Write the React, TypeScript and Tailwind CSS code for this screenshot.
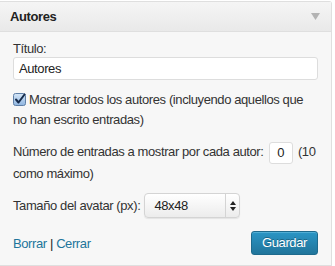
const Checkbox = () => (
    <span className="inline-block align-[-2px] mr-[3px] w-[13px] h-[13px] relative">
        <svg width="13" height="13" viewBox="0 0 13 13" className="block">
            <defs>
                <linearGradient id="cb" x1="0" y1="0" x2="0" y2="1">
                    <stop offset="0" stopColor="#d5e6f7"/>
                    <stop offset="1" stopColor="#8fb5e0"/>
                </linearGradient>
            </defs>
            <rect x="0.5" y="0.5" width="12" height="12" rx="2" fill="url(#cb)" stroke="#5f7fa6"/>
            <path d="M3 6.5 L5.5 9.5 L11.5 1.5" fill="none" stroke="#152a4a" strokeWidth="2" strokeLinecap="round" strokeLinejoin="round"/>
        </svg>
    </span>
)

const App = () => {
    return (
        <div className="w-[335px] h-[266px] bg-white pt-[1px] text-[13px] tracking-[-0.4px] text-[#333] overflow-hidden"
             style={{fontFamily: '"Liberation Sans", Arial, sans-serif'}}>
            <div className="w-[332px] h-[265px] border border-l-0 border-[#dfdfdf] bg-[#f7f7f7] rounded-tr-[3px]">
                <div className="h-[30px] flex items-center justify-between pl-[10px] pr-[11px] border-b border-[#dfdfdf] bg-gradient-to-b from-[#f5f5f5] to-[#e9e9e9]">
                    <span className="font-bold text-[#222]">Autores</span>
                    <svg width="9" height="7" viewBox="0 0 9 7">
                        <path d="M0 0 H9 L4.5 7 Z" fill="#b3b3b3"/>
                    </svg>
                </div>
                <div className="px-[13px] pt-[8px]">
                    <div className="leading-[17px]">Título:</div>
                    <div className="h-[23px] w-[305px] bg-white border border-[#dddddd] rounded-[3px] flex items-center px-[5px] text-[#222]">
                        Autores
                    </div>
                    <p className="mt-[10px] leading-[20px]">
                        <Checkbox/>Mostrar todos los autores (incluyendo aquellos que no han escrito entradas)
                    </p>
                    <p className="mt-[12px] leading-[20px]">
                        Número de entradas a mostrar por cada autor:{" "}
                        <span className="inline-flex align-middle items-center justify-center w-[24px] h-[22px] bg-white border border-[#dddddd] rounded-[3px] text-[#222] mx-[2px]">0</span>
                        {" "}(10 como máximo)
                    </p>
                    <div className="mt-[9px] flex items-center h-[25px]">
                        <span>Tamaño del avatar (px):</span>
                        <div className="ml-[4px] w-[96px] h-[25px] rounded-[4px] border border-[#d4d4d4] bg-gradient-to-b from-white to-[#ececec] flex items-center shadow-[0_1px_1px_rgba(0,0,0,0.08)]">
                            <span className="flex-1 pl-[9px] text-[#222]">48x48</span>
                            <div className="w-[14px] h-full border-l border-[#d4d4d4] flex items-center justify-center">
                                <svg width="6" height="10" viewBox="0 0 6 10">
                                    <path d="M0 4 L3 0 L6 4 Z M0 6 L3 10 L6 6 Z" fill="#222"/>
                                </svg>
                            </div>
                        </div>
                    </div>
                    <div className="mt-[13px] flex items-center justify-between">
                        <div className="text-[#21759b] pt-[2px]">
                            <span>Borrar</span>
                            <span className="text-[#222]"> | </span>
                            <span>Cerrar</span>
                        </div>
                        <button className="w-[67px] h-[24px] rounded-[3px] border border-[#1e6a8d] bg-gradient-to-b from-[#2a95c5] to-[#21759b] text-white text-[13px] shadow-[inset_0_1px_0_rgba(120,200,230,0.5)] [text-shadow:0_-1px_0_rgba(0,0,0,0.3)]">
                            Guardar
                        </button>
                    </div>
                </div>
            </div>
        </div>
    )
}

export default App
